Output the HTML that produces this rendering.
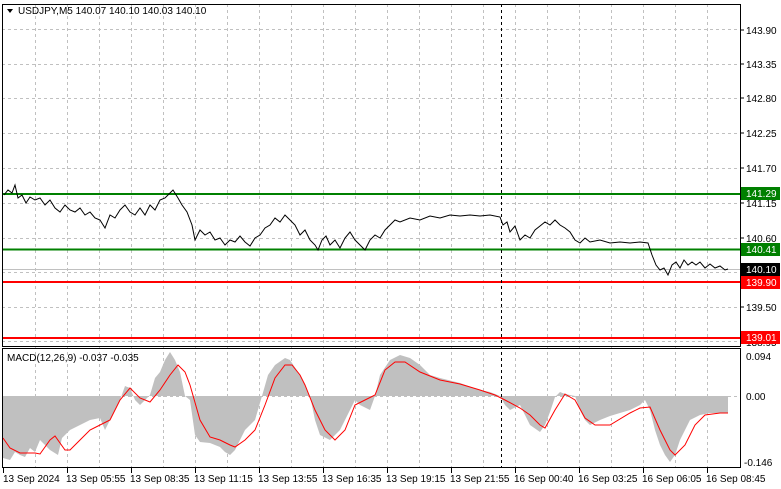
<!DOCTYPE html>
<html><head><meta charset="utf-8"><style>
html,body{margin:0;padding:0;background:#fff;}
svg{display:block;font-family:"Liberation Sans",sans-serif;font-size:10px;}
</style></head><body>
<svg width="781" height="489" viewBox="0 0 781 489" xmlns="http://www.w3.org/2000/svg">
<rect width="781" height="489" fill="#fff"/>
<g stroke="#c0c0c0" stroke-dasharray="3,3" stroke-width="1">
<line x1="2" y1="29.5" x2="740" y2="29.5"/>
<line x1="2" y1="64.5" x2="740" y2="64.5"/>
<line x1="2" y1="98.5" x2="740" y2="98.5"/>
<line x1="2" y1="133.5" x2="740" y2="133.5"/>
<line x1="2" y1="168.5" x2="740" y2="168.5"/>
<line x1="2" y1="203.5" x2="740" y2="203.5"/>
<line x1="2" y1="238.5" x2="740" y2="238.5"/>
<line x1="2" y1="272.5" x2="740" y2="272.5"/>
<line x1="2" y1="307.5" x2="740" y2="307.5"/>
<line x1="2" y1="341.5" x2="740" y2="341.5"/>
<line x1="2" y1="396.5" x2="740" y2="396.5"/>
</g>
<g stroke="#c0c0c0" stroke-dasharray="3,3" stroke-width="1">
<line x1="35.5" y1="4" x2="35.5" y2="468"/><line x1="67.5" y1="4" x2="67.5" y2="468"/>
<line x1="99.5" y1="4" x2="99.5" y2="468"/><line x1="131.5" y1="4" x2="131.5" y2="468"/>
<line x1="163.5" y1="4" x2="163.5" y2="468"/><line x1="195.5" y1="4" x2="195.5" y2="468"/>
<line x1="227.5" y1="4" x2="227.5" y2="468"/><line x1="259.5" y1="4" x2="259.5" y2="468"/>
<line x1="291.5" y1="4" x2="291.5" y2="468"/><line x1="323.5" y1="4" x2="323.5" y2="468"/>
<line x1="355.5" y1="4" x2="355.5" y2="468"/><line x1="387.5" y1="4" x2="387.5" y2="468"/>
<line x1="419.5" y1="4" x2="419.5" y2="468"/><line x1="451.5" y1="4" x2="451.5" y2="468"/>
<line x1="483.5" y1="4" x2="483.5" y2="468"/><line x1="515.5" y1="4" x2="515.5" y2="468"/>
<line x1="547.5" y1="4" x2="547.5" y2="468"/><line x1="579.5" y1="4" x2="579.5" y2="468"/>
<line x1="611.5" y1="4" x2="611.5" y2="468"/><line x1="643.5" y1="4" x2="643.5" y2="468"/>
<line x1="675.5" y1="4" x2="675.5" y2="468"/><line x1="707.5" y1="4" x2="707.5" y2="468"/>
</g>
<line x1="2" y1="194" x2="740" y2="194" stroke="#008000" stroke-width="2"/>
<line x1="2" y1="249.5" x2="740" y2="249.5" stroke="#008000" stroke-width="2"/>
<line x1="2" y1="282" x2="740" y2="282" stroke="#ff0000" stroke-width="2"/>
<line x1="2" y1="338" x2="740" y2="338" stroke="#ff0000" stroke-width="2"/>
<line x1="2" y1="269.5" x2="740" y2="269.5" stroke="#c0c0c0"/>
<polyline fill="none" stroke="#000" stroke-width="1" points="4,195 8,190 12,193 15,185 18,198 22,195 26,203 30,197 35,200 40,198 45,205 50,200 55,208 60,212 65,205 70,210 75,212 80,208 85,215 90,212 95,218 100,220 105,228 110,215 115,218 120,210 125,205 130,212 135,215 140,208 145,215 150,205 155,210 160,200 165,198 170,193 173,190 178,198 182,205 187,212 192,225 195,240 200,230 205,235 210,232 215,240 220,238 225,245 230,240 235,242 240,236 245,242 250,246 255,238 260,235 265,228 270,225 275,218 280,222 285,215 290,220 295,225 300,235 305,230 310,240 315,245 318,250 322,240 326,236 330,245 335,240 340,248 345,238 350,232 355,240 360,245 365,250 370,240 375,235 380,238 385,230 390,225 395,220 400,222 410,218 420,220 430,216 440,218 450,215 460,216 470,215 480,216 490,215 500,217 503,225 507,222 510,232 515,226 520,240 525,235 530,238 535,230 540,226 545,222 550,225 555,220 560,225 565,228 570,232 575,240 580,243 585,238 590,242 600,240 610,243 620,242 630,243 640,242 648,243 652,255 656,265 660,270 664,268 668,275 672,265 676,262 680,268 684,260 688,265 692,262 696,265 700,262 705,268 710,264 715,268 720,266 725,270 728,269"/>
<polygon fill="#c0c0c0" points="3,396 3,458 10,460 15,452 20,455 25,457 30,448 35,452 40,440 45,445 50,450 58,455 62,438 70,430 80,425 90,420 100,418 105,430 110,420 115,410 120,400 125,386 130,388 135,400 140,405 145,400 150,395 155,378 160,372 165,360 170,352 175,360 180,372 185,396 190,400 195,435 200,442 210,443 220,447 225,452 230,455 235,450 245,430 255,420 262,396 268,375 275,365 285,358 290,360 300,375 310,396 315,420 320,435 330,440 340,430 350,410 355,400 360,405 370,410 375,396 380,375 390,360 400,355 410,358 420,365 430,375 440,378 460,383 480,390 490,392 500,396 505,405 510,410 520,405 530,425 540,432 545,425 550,412 555,397 560,392 565,394 575,396 580,410 585,420 590,425 600,420 610,416 620,413 630,410 640,405 645,400 650,410 655,430 660,445 665,455 670,462 675,455 680,440 685,430 690,420 700,415 710,413 728,413 728,396"/>
<polyline fill="none" stroke="#ff0000" stroke-width="1" points="3,438 10,448 20,453 35,453 40,454 50,440 55,436 65,450 70,450 80,440 90,430 100,425 110,420 120,400 130,388 140,398 150,402 160,390 170,375 178,365 185,372 190,385 200,420 210,437 220,440 230,445 235,447 245,440 255,430 265,405 275,378 285,365 292,365 300,375 305,385 315,410 325,430 335,440 345,430 355,405 365,400 375,395 385,370 395,362 405,362 420,372 440,380 460,384 480,390 495,395 505,400 520,408 530,415 540,425 545,428 555,410 565,394 575,400 585,418 595,425 610,425 630,413 640,408 650,407 660,430 670,450 675,455 685,445 695,425 705,415 720,413 728,413"/>
<line x1="501.5" y1="4" x2="501.5" y2="468" stroke="#000" stroke-dasharray="3,3"/>
<rect x="2.5" y="4.5" width="738" height="342" fill="none" stroke="#000"/>
<rect x="2.5" y="348.5" width="738" height="119" fill="none" stroke="#000"/>
<g stroke="#000">
<line x1="740" y1="30" x2="744" y2="30"/><line x1="740" y1="64" x2="744" y2="64"/><line x1="740" y1="98" x2="744" y2="98"/><line x1="740" y1="133" x2="744" y2="133"/><line x1="740" y1="168" x2="744" y2="168"/><line x1="740" y1="203" x2="744" y2="203"/><line x1="740" y1="238" x2="744" y2="238"/><line x1="740" y1="307" x2="744" y2="307"/>
<line x1="3.5" y1="468" x2="3.5" y2="473"/><line x1="67.5" y1="468" x2="67.5" y2="473"/><line x1="131.5" y1="468" x2="131.5" y2="473"/><line x1="195.5" y1="468" x2="195.5" y2="473"/><line x1="259.5" y1="468" x2="259.5" y2="473"/><line x1="323.5" y1="468" x2="323.5" y2="473"/><line x1="387.5" y1="468" x2="387.5" y2="473"/><line x1="451.5" y1="468" x2="451.5" y2="473"/><line x1="515.5" y1="468" x2="515.5" y2="473"/><line x1="579.5" y1="468" x2="579.5" y2="473"/><line x1="643.5" y1="468" x2="643.5" y2="473"/><line x1="707.5" y1="468" x2="707.5" y2="473"/>
</g>
<g fill="#000">
<text x="746" y="34">143.90</text><text x="746" y="68">143.35</text><text x="746" y="102">142.80</text><text x="746" y="137">142.25</text><text x="746" y="172">141.70</text><text x="746" y="207">141.15</text><text x="746" y="242">140.60</text><text x="746" y="311">139.50</text><text x="746" y="346">138.95</text>
<text x="746" y="360">0.094</text><text x="746" y="400">0.00</text><text x="744" y="466">-0.146</text>
<text x="3" y="482">13 Sep 2024</text><text x="66" y="482">13 Sep 05:55</text><text x="130" y="482">13 Sep 08:35</text><text x="194" y="482">13 Sep 11:15</text><text x="258" y="482">13 Sep 13:55</text><text x="322" y="482">13 Sep 16:35</text><text x="386" y="482">13 Sep 19:15</text><text x="450" y="482">13 Sep 21:55</text><text x="514" y="482">16 Sep 00:40</text><text x="578" y="482">16 Sep 03:25</text><text x="642" y="482">16 Sep 06:05</text><text x="706" y="482">16 Sep 08:45</text>
</g>
<rect x="741" y="187" width="39" height="13" fill="#008000"/><text x="746" y="197" fill="#fff">141.29</text>
<rect x="741" y="243" width="39" height="13" fill="#008000"/><text x="746" y="253" fill="#fff">140.41</text>
<rect x="741" y="263" width="39" height="13" fill="#000"/><text x="746" y="273" fill="#fff">140.10</text>
<rect x="741" y="276" width="39" height="13" fill="#ff0000"/><text x="746" y="286" fill="#fff">139.90</text>
<rect x="741" y="331" width="39" height="13" fill="#ff0000"/><text x="746" y="341" fill="#fff">139.01</text>
<polygon points="7,9 13,9 10,13" fill="#000"/>
<text x="18" y="14" fill="#000">USDJPY,M5  140.07 140.10 140.03 140.10</text>
<text x="7" y="361" fill="#000">MACD(12,26,9) -0.037 -0.035</text>
</svg>
</body></html>
